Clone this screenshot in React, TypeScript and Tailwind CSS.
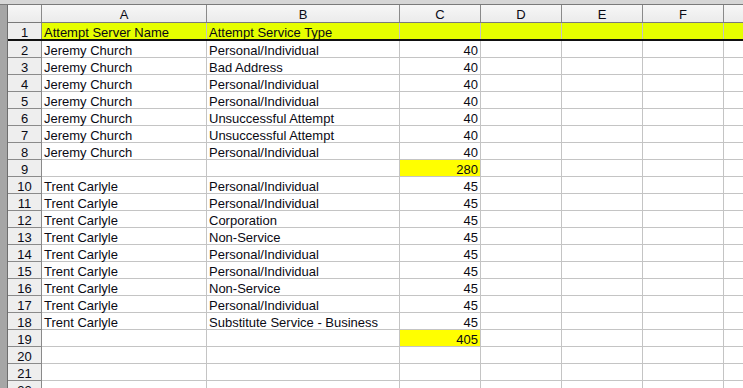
import React from "react";

type Row = { a?: string; b?: string; c?: string; total?: boolean; header?: boolean };

const rows: Row[] = [
  { a: "Attempt Server Name", b: "Attempt Service Type", header: true },
  { a: "Jeremy Church", b: "Personal/Individual", c: "40" },
  { a: "Jeremy Church", b: "Bad Address", c: "40" },
  { a: "Jeremy Church", b: "Personal/Individual", c: "40" },
  { a: "Jeremy Church", b: "Personal/Individual", c: "40" },
  { a: "Jeremy Church", b: "Unsuccessful Attempt", c: "40" },
  { a: "Jeremy Church", b: "Unsuccessful Attempt", c: "40" },
  { a: "Jeremy Church", b: "Personal/Individual", c: "40" },
  { c: "280", total: true },
  { a: "Trent Carlyle", b: "Personal/Individual", c: "45" },
  { a: "Trent Carlyle", b: "Personal/Individual", c: "45" },
  { a: "Trent Carlyle", b: "Corporation", c: "45" },
  { a: "Trent Carlyle", b: "Non-Service", c: "45" },
  { a: "Trent Carlyle", b: "Personal/Individual", c: "45" },
  { a: "Trent Carlyle", b: "Personal/Individual", c: "45" },
  { a: "Trent Carlyle", b: "Non-Service", c: "45" },
  { a: "Trent Carlyle", b: "Personal/Individual", c: "45" },
  { a: "Trent Carlyle", b: "Substitute Service - Business", c: "45" },
  { c: "405", total: true },
  {},
  {},
  {},
];

const cols = [
  { l: "A", w: "w-[165px]" },
  { l: "B", w: "w-[193px]" },
  { l: "C", w: "w-[81px]" },
  { l: "D", w: "w-[81px]" },
  { l: "E", w: "w-[81px]" },
  { l: "F", w: "w-[81px]" },
];

export default function App() {
  return (
    <div
      className="w-[743px] h-[388px] overflow-hidden bg-white text-[13px] leading-none text-[#0a0a14] flex flex-col"
      style={{ fontFamily: '"Liberation Sans", Arial, sans-serif' }}
    >
      <div className="h-[5px] shrink-0 bg-[#d6d6d6] border-b border-[#7a7a7a]" />
      <div className="flex flex-1 min-h-0">
        <div className="w-[8px] shrink-0 bg-[#a6a6a6] border-r border-[#6e6e6e]" />
        <div className="flex-1 flex flex-col min-w-0">
          {/* column headers */}
          <div className="flex h-[18px] shrink-0 border-b border-[#7a7a7a] bg-gradient-to-b from-[#f7f7f7] to-[#ebebeb]">
            <div className="w-[34px] shrink-0 border-r border-[#8a8a8a]" />
            {cols.map((c) => (
              <div
                key={c.l}
                className={`${c.w} shrink-0 border-r border-[#8a8a8a] flex items-center justify-center pt-[2px]`}
              >
                {c.l}
              </div>
            ))}
            <div className="flex-1" />
          </div>
          {rows.map((r, i) => {
            const isHeader = !!r.header;
            return (
              <div
                key={i}
                className={`flex shrink-0 ${
                  isHeader ? "h-[18px] border-b-2 border-[#111]" : "h-[17px] border-b border-[#c4c4c4]"
                }`}
              >
                <div
                  className={`w-[34px] shrink-0 bg-[#eeeeee] border-r border-[#8a8a8a] flex items-center justify-center pt-[2px] ${
                    isHeader ? "" : "shadow-[inset_0_-1px_0_#8a8a8a] -mb-px h-[17px]"
                  }`}
                >
                  {i + 1}
                </div>
                <div
                  className={`w-[165px] shrink-0 border-r border-[#c4c4c4] flex items-center pl-[2px] pt-[2px] whitespace-nowrap ${
                    isHeader ? "bg-[#e6ff00]" : ""
                  }`}
                >
                  {r.a}
                </div>
                <div
                  className={`w-[193px] shrink-0 border-r border-[#c4c4c4] flex items-center pl-[2px] pt-[2px] whitespace-nowrap ${
                    isHeader ? "bg-[#e6ff00]" : ""
                  }`}
                >
                  {r.b}
                </div>
                <div
                  className={`w-[81px] shrink-0 border-r border-[#c4c4c4] flex items-center justify-end pr-[2px] pt-[2px] ${
                    isHeader ? "bg-[#e6ff00]" : r.total ? "bg-[#ffff00]" : ""
                  }`}
                >
                  {r.c}
                </div>
                {[0, 1, 2].map((k) => (
                  <div
                    key={k}
                    className={`w-[81px] shrink-0 border-r border-[#c4c4c4] ${isHeader ? "bg-[#e6ff00]" : ""}`}
                  />
                ))}
                <div className={`flex-1 ${isHeader ? "bg-[#e6ff00]" : ""}`} />
              </div>
            );
          })}
        </div>
      </div>
    </div>
  );
}
